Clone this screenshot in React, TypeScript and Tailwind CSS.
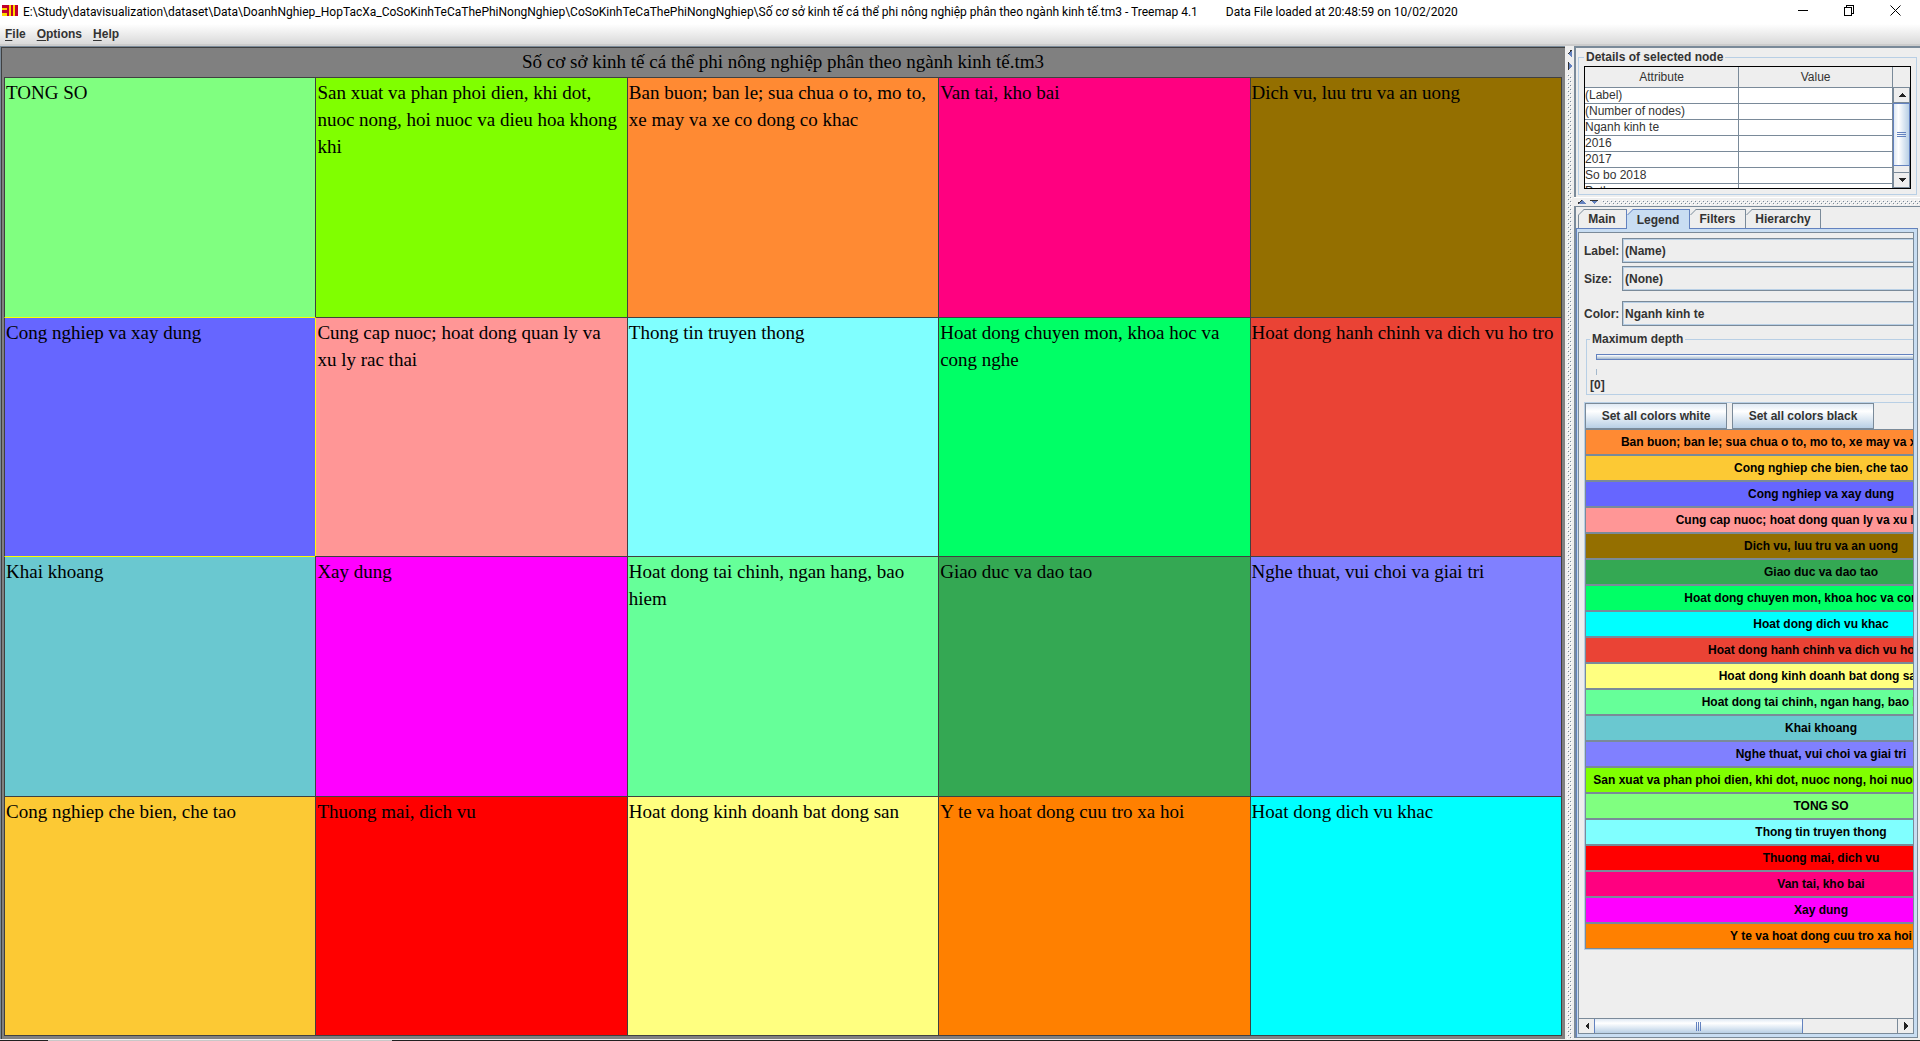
import React from "react";

type Tile = { name: string; fill: string; edge: string };

const dark = "border-[#404040]";

const tiles: Tile[] = [
  { name: "TONG SO", fill: "bg-[#80ff80]", edge: dark },
  { name: "San xuat va phan phoi dien, khi dot, nuoc nong, hoi nuoc va dieu hoa khong khi", fill: "bg-[#80ff00]", edge: dark },
  { name: "Ban buon; ban le; sua chua o to, mo to, xe may va xe co dong co khac", fill: "bg-[#ff8a33]", edge: dark },
  { name: "Van tai, kho bai", fill: "bg-[#ff0080]", edge: dark },
  { name: "Dich vu, luu tru va an uong", fill: "bg-[#946f00]", edge: dark },
  { name: "Cong nghiep va xay dung", fill: "bg-[#6666ff]", edge: "border-t-[#ffff00] border-l-[#404040]" },
  { name: "Cung cap nuoc; hoat dong quan ly va xu ly rac thai", fill: "bg-[#ff9696]", edge: "border-t-[#404040] border-l-[#ffff00]" },
  { name: "Thong tin truyen thong", fill: "bg-[#80ffff]", edge: dark },
  { name: "Hoat dong chuyen mon, khoa hoc va cong nghe", fill: "bg-[#00ff66]", edge: dark },
  { name: "Hoat dong hanh chinh va dich vu ho tro", fill: "bg-[#ea4335]", edge: dark },
  { name: "Khai khoang", fill: "bg-[#6ac8d0]", edge: "border-t-[#ffff00] border-l-[#404040]" },
  { name: "Xay dung", fill: "bg-[#ff00ff]", edge: dark },
  { name: "Hoat dong tai chinh, ngan hang, bao hiem", fill: "bg-[#66ff99]", edge: dark },
  { name: "Giao duc va dao tao", fill: "bg-[#34a853]", edge: dark },
  { name: "Nghe thuat, vui choi va giai tri", fill: "bg-[#8080ff]", edge: dark },
  { name: "Cong nghiep che bien, che tao", fill: "bg-[#fcc934]", edge: dark },
  { name: "Thuong mai, dich vu", fill: "bg-[#ff0000]", edge: dark },
  { name: "Hoat dong kinh doanh bat dong san", fill: "bg-[#ffff80]", edge: dark },
  { name: "Y te va hoat dong cuu tro xa hoi", fill: "bg-[#ff8000]", edge: dark },
  { name: "Hoat dong dich vu khac", fill: "bg-[#00ffff]", edge: dark },
];

const legendRows = [...tiles].sort((a, b) => (a.name < b.name ? -1 : 1));

const attributes = ["(Label)", "(Number of nodes)", "Nganh kinh te", "2016", "2017", "So bo 2018", "Path"];

const tabs = [
  { name: "Main", style: "h-[19px] w-[49px] border-t-[#7a8a99] border-r-[#6382bf]" },
  { name: "Legend", style: "-mb-px h-5 w-[63px] border-[#6382bf] bg-[#c8ddf2]" },
  { name: "Filters", style: "h-[19px] w-[56px] border-[#7a8a99]" },
  { name: "Hierarchy", style: "h-[19px] w-[75px] border-[#7a8a99]" },
];

function Arrow({ points, fill = "#222222" }: { points: string; fill?: string }) {
  return (
    <svg className="size-2 shrink-0" viewBox="0 0 8 8" shapeRendering="crispEdges" aria-hidden="true">
      <polygon points={points} fill={fill} />
    </svg>
  );
}

function SplitArrow({ points, edge }: { points: string; edge: string }) {
  return (
    <svg className="size-2 shrink-0" viewBox="0 0 8 8" shapeRendering="crispEdges" aria-hidden="true">
      <polygon points={points} fill="#6382bf" />
      <path d={edge} stroke="#333333" fill="none" />
    </svg>
  );
}

function Bumps({ id }: { id: string }) {
  return (
    <svg className="block h-full w-full" aria-hidden="true" shapeRendering="crispEdges">
      <defs>
        <pattern id={id} width="4" height="4" patternUnits="userSpaceOnUse">
          <rect x="0" y="0" width="1" height="1" fill="#ffffff" />
          <rect x="1" y="1" width="1" height="1" fill="#7a8a99" />
          <rect x="2" y="2" width="1" height="1" fill="#ffffff" />
          <rect x="3" y="3" width="1" height="1" fill="#7a8a99" />
        </pattern>
      </defs>
      <rect width="100%" height="100%" fill={`url(#${id})`} />
    </svg>
  );
}

function TitleBar() {
  return (
    <header className="flex h-6 shrink-0 items-center bg-white pl-[2px] font-[Roboto,'Noto_Sans',sans-serif] text-[12px] text-black">
      <svg className="mt-[5px] h-[11px] w-4 shrink-0 self-start" viewBox="0 0 16 11" shapeRendering="crispEdges" aria-hidden="true">
        <rect width="16" height="11" fill="#c00030" />
        <rect x="0" y="3" width="5" height="2" fill="#ffd800" />
        <rect x="0" y="8" width="5" height="3" fill="#ffd800" />
        <rect x="7" width="2" height="11" fill="#ffd800" />
        <rect x="11" width="2" height="11" fill="#ffd800" />
      </svg>
      <h1 className="ml-[5px] whitespace-pre">
        E:\Study\datavisualization\dataset\Data\DoanhNghiep_HopTacXa_CoSoKinhTeCaThePhiNongNghiep\CoSoKinhTeCaThePhiNongNghiep\Số cơ sở kinh tế cá thể phi nông nghiệp phân theo ngành kinh tế.tm3 - Treemap 4.1
      </h1>
      <p className="ml-7 whitespace-pre">Data File loaded at 20:48:59 on 10/02/2020</p>
      <div className="mr-[2px] ml-auto flex h-full pb-[3px]">
        <button aria-label="Minimize" className="flex w-[46px] items-center justify-center">
          <svg className="size-[11px]" viewBox="0 0 11 11" shapeRendering="crispEdges"><path d="M0 5.5H10" stroke="#000" /></svg>
        </button>
        <button aria-label="Restore" className="flex w-[46px] items-center justify-center">
          <svg className="size-[11px]" viewBox="0 0 11 11" fill="none" stroke="#000" shapeRendering="crispEdges">
            <path d="M0.5 2.5H7.5V10.5H0.5Z M2.5 2.5V0.5H9.5V8.5H7.5" />
          </svg>
        </button>
        <button aria-label="Close" className="flex w-[46px] items-center justify-center">
          <svg className="size-[11px]" viewBox="0 0 11 11" stroke="#000"><path d="M0.5 0.5L10.5 10.5M10.5 0.5L0.5 10.5" /></svg>
        </button>
      </div>
    </header>
  );
}

function MenuBar() {
  return (
    <nav className="flex h-[22px] shrink-0 items-center gap-[11px] border-b-2 border-[#cccccc] bg-linear-to-b from-white to-[#dadada] px-[5px] font-bold">
      {["File", "Options", "Help"].map((m) => (
        <button key={m}>
          <span className="underline underline-offset-2">{m[0]}</span>
          {m.slice(1)}
        </button>
      ))}
    </nav>
  );
}

function Treemap() {
  return (
    <main className="flex min-w-0 flex-1 flex-col border-t border-l border-[#7a8a99] font-['Liberation_Serif','Times_New_Roman',serif] text-[19px] text-black">
      <div className="flex flex-1 flex-col border-t border-l border-[#404040] bg-[#808080] pr-[3px] pb-[3px] pl-[2px]">
        <h2 className="flex h-[29px] shrink-0 items-center justify-center">Số cơ sở kinh tế cá thể phi nông nghiệp phân theo ngành kinh tế.tm3</h2>
        <div className="grid flex-1 grid-cols-5 grid-rows-4 border-r border-b border-[#404040]">
          {tiles.map((t) => (
            <section key={t.name} className={`min-w-0 border-t border-l pt-px pr-1 pl-px leading-[27px] ${t.edge} ${t.fill}`}>
              {t.name}
            </section>
          ))}
        </div>
      </div>
    </main>
  );
}

function Details() {
  return (
    <fieldset className="mx-[2px] mt-px mb-[2px] h-[146px] min-w-0 border border-[#b8cfe5] px-[5px] pt-px">
      <legend className="px-[2px] leading-4 font-bold">Details of selected node</legend>
      <div className="flex h-[123px] overflow-hidden border border-black bg-white">
        <div className="min-w-0 flex-1">
          <table className="w-full table-fixed border-collapse">
            <thead>
              <tr className="h-5 bg-[#eeeeee]">
                <th className="border-r border-b border-[#7a8a99] p-0 font-normal">Attribute</th>
                <th className="border-r border-b border-[#7a8a99] p-0 font-normal">Value</th>
              </tr>
            </thead>
            <tbody>
              {attributes.map((a) => (
                <tr key={a} className="h-4">
                  <td className="border-r border-b border-[#7a8a99] p-0 leading-[15px]">{a}</td>
                  <td className="border-r border-b border-[#7a8a99] p-0" />
                </tr>
              ))}
            </tbody>
          </table>
        </div>
        <div className="flex w-[17px] shrink-0 flex-col bg-[#eeeeee] pt-5">
          <button aria-label="Scroll up" className="flex h-4 items-center justify-center border border-[#7a8a99]">
            <Arrow points="4,2 8,6 0,6" />
          </button>
          <div className="flex h-[63px] flex-col items-center justify-center gap-px border border-[#6382bf] bg-linear-to-r from-[#dfe9f4] via-white via-30% to-[#b8cfe5]">
            <i className="h-px w-[9px] bg-[#6382bf]" />
            <i className="h-px w-[9px] bg-[#6382bf]" />
            <i className="h-px w-[9px] bg-[#6382bf]" />
          </div>
          <div className="flex-1 border-x border-[#7a8a99]" />
          <button aria-label="Scroll down" className="flex h-4 items-center justify-center border border-[#7a8a99]">
            <Arrow points="0,2 8,2 4,6" />
          </button>
        </div>
      </div>
    </fieldset>
  );
}

function Tabs() {
  return (
    <div role="tablist" className="z-10 flex items-start pt-[2px] pl-[2px]">
      {tabs.map((t) => (
        <button
          key={t.name}
          role="tab"
          aria-selected={t.name === "Legend"}
          className={`relative border-t border-r leading-[18px] font-bold ${t.style}`}
        >
          <svg className="absolute -top-px left-0 h-[19px] w-[6px]" viewBox="0 0 6 19" aria-hidden="true">
            <path d="M0 0H6L0 6Z" fill="#eeeeee" />
            <path d="M0.5 6L6 0.5" fill="none" stroke={t.name === "Legend" ? "#6382bf" : "#7a8a99"} />
            {t.name === "Main" && <path d="M0.5 19V6" stroke="#7a8a99" />}
          </svg>
          {t.name}
        </button>
      ))}
    </div>
  );
}

function Field({ id, label, value }: { id: string; label: string; value: string }) {
  return (
    <div className="flex items-center">
      <label htmlFor={id} className="w-[38px] shrink-0">{label}</label>
      <select id={id} className="h-[25px] flex-1 appearance-none border border-[#7a8a99] bg-[#eeeeee] px-[2px] font-bold shadow-[inset_1px_1px_0_#b8cfe5,inset_0_-1px_0_#b8cfe5]">
        <option>{value}</option>
      </select>
    </div>
  );
}

function LegendPanel() {
  const action = "h-[26px] w-[142px] border border-[#7a8a99] bg-linear-to-b from-[#dfe9f4] via-white via-30% to-[#b8cfe5]";
  return (
    <div className="flex min-h-0 flex-1 flex-col border border-t-[#6382bf] border-r-[#7a8a99] border-b-[#7a8a99] border-l-[#6382bf] bg-[#c8ddf2] pt-[3px] pr-[3px] pb-[3px] pl-px">
      <div className="flex min-h-0 flex-1 flex-col border border-[#7a8a99] bg-[#eeeeee]">
        <div className="min-h-0 flex-1 overflow-hidden pt-[5px] pl-[5px] font-bold">
          <div className="w-[474px]">
            <Field id="label-by" label="Label:" value="(Name)" />
            <div className="mt-[3px]">
              <Field id="size-by" label="Size:" value="(None)" />
            </div>
            <div className="mt-[10px]">
              <Field id="color-by" label="Color:" value="Nganh kinh te" />
            </div>
            <fieldset className="mt-[5px] ml-[2px] h-16 min-w-0 border border-[#b8cfe5]">
              <legend className="ml-[3px] px-[2px] leading-4">
                <label htmlFor="depth">Maximum depth</label>
              </legend>
              <input
                id="depth"
                type="range"
                min={0}
                max={1}
                defaultValue={0}
                className="mt-[7px] ml-[9px] block h-[6px] w-[450px] appearance-none border border-[#6382bf] bg-linear-to-b from-white to-[#a3b8cc] [&::-webkit-slider-thumb]:size-0 [&::-webkit-slider-thumb]:appearance-none"
              />
              <div className="mt-[9px] ml-[9px] h-[6px] w-px bg-[#a3b8cc]" />
              <div className="ml-[3px] leading-5">[0]</div>
            </fieldset>
            <div className="mt-[7px] border border-[#b8cfe5]">
              <div className="flex gap-[5px]">
                <button className={action}>Set all colors white</button>
                <button className={action}>Set all colors black</button>
              </div>
              {legendRows.map((t) => (
                <button key={t.name} className={`block h-[26px] w-full border border-[#7a8a99] text-center whitespace-nowrap text-black ${t.fill}`}>
                  {t.name}
                </button>
              ))}
            </div>
          </div>
        </div>
        <div className="flex h-[15px] shrink-0 border-t border-[#7a8a99]">
          <button aria-label="Scroll left" className="flex w-[15px] items-center justify-center">
            <Arrow points="6,0 6,8 2,4" />
          </button>
          <div className="flex flex-1 border-r border-[#7a8a99]">
            <div className="flex w-[69%] items-center justify-center gap-px border-x border-[#6382bf] bg-linear-to-b from-[#dfe9f4] via-white via-30% to-[#b8cfe5]">
              <i className="h-[9px] w-px bg-[#6382bf]" />
              <i className="h-[9px] w-px bg-[#6382bf]" />
              <i className="h-[9px] w-px bg-[#6382bf]" />
            </div>
          </div>
          <button aria-label="Scroll right" className="flex w-[15px] items-center justify-center">
            <Arrow points="2,0 2,8 6,4" />
          </button>
        </div>
      </div>
    </div>
  );
}

export default function App() {
  return (
    <div className="flex h-screen flex-col overflow-hidden bg-[#eeeeee] font-['Liberation_Sans',Arial,sans-serif] text-[12px] text-[#333333]">
      <TitleBar />
      <MenuBar />
      <div className="flex min-h-0 flex-1">
        <Treemap />
        <div className="flex w-[9px] shrink-0 flex-col items-center">
          <div className="flex flex-col gap-1 py-1">
            <SplitArrow points="6,0 6,8 2,4" edge="M5.5 0L2.5 4" />
            <SplitArrow points="2,0 2,8 6,4" edge="M2.5 0V8" />
          </div>
          <div className="w-[5px] flex-1"><Bumps id="bumps-v" /></div>
        </div>
        <aside className="flex w-[346px] shrink-0 flex-col pb-px">
          <div className="border-t-2 border-l-2 border-[#7a8a99] pr-px"><Details /></div>
          <div className="flex h-[9px] shrink-0 items-center border-t border-white">
            <div className="flex gap-1 px-1">
              <SplitArrow points="4,2 8,6 0,6" edge="M4 2.5L0 5.5" />
              <SplitArrow points="0,2 8,2 4,6" edge="M0 2.5H8" />
            </div>
            <div className="h-[5px] flex-1"><Bumps id="bumps-h" /></div>
          </div>
          <div className="flex min-h-0 flex-1 flex-col border-t border-l-2 border-[#7a8a99] pr-[2px]">
            <Tabs />
            <LegendPanel />
          </div>
        </aside>
      </div>
      <div className="mt-px flex h-px shrink-0 bg-[#202020]">
        <div className="ml-12 w-[344px] bg-[#c8c8c8]" />
      </div>
    </div>
  );
}
